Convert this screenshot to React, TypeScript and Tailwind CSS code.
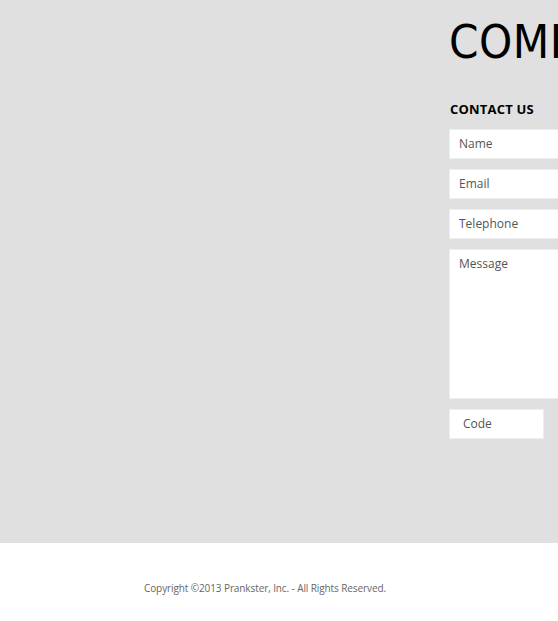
import React from "react";

const Field = ({ label, tall }: { label: string; tall?: boolean }) => (
  <div
    className={`w-[300px] bg-white border border-[#eeeeee] px-[9px] text-[12px] text-[#555555] ${
      tall ? "h-[150px] pt-[5px]" : "h-[30px] flex items-center"
    }`}
  >
    {label}
  </div>
);

export default function App() {
  return (
    <div className="w-[558px] h-[621px] overflow-hidden bg-white" style={{ fontFamily: "'Open Sans', sans-serif" }}>
      <div className="h-[543px] bg-[#e0e0e0] pl-[449px]">
        <h1
          className="pt-[14px] text-[47px] leading-[56px] font-normal tracking-[0.5px] text-black whitespace-nowrap"
          style={{ fontFamily: "'Liberation Sans Narrow', 'DejaVu Sans Condensed', sans-serif" }}
        >
          COMING SOON
        </h1>
        <h2 className="mt-[31px] ml-px text-[13px] font-bold text-black leading-[16px] tracking-[0.2px]">
          CONTACT US
        </h2>
        <div className="mt-[12px] flex flex-col gap-[10px]">
          <Field label="Name" />
          <Field label="Email" />
          <Field label="Telephone" />
          <Field label="Message" tall />
          <div className="w-[95px] h-[30px] bg-white border border-[#eeeeee] pl-[13px] flex items-center text-[12px] text-[#555555]">
            Code
          </div>
        </div>
      </div>
      <div className="pl-[144px] pt-[38px] text-[10px] tracking-[-0.1px] text-[#666666]">
        Copyright ©2013 Prankster, Inc. - All Rights Reserved.
      </div>
    </div>
  );
}
